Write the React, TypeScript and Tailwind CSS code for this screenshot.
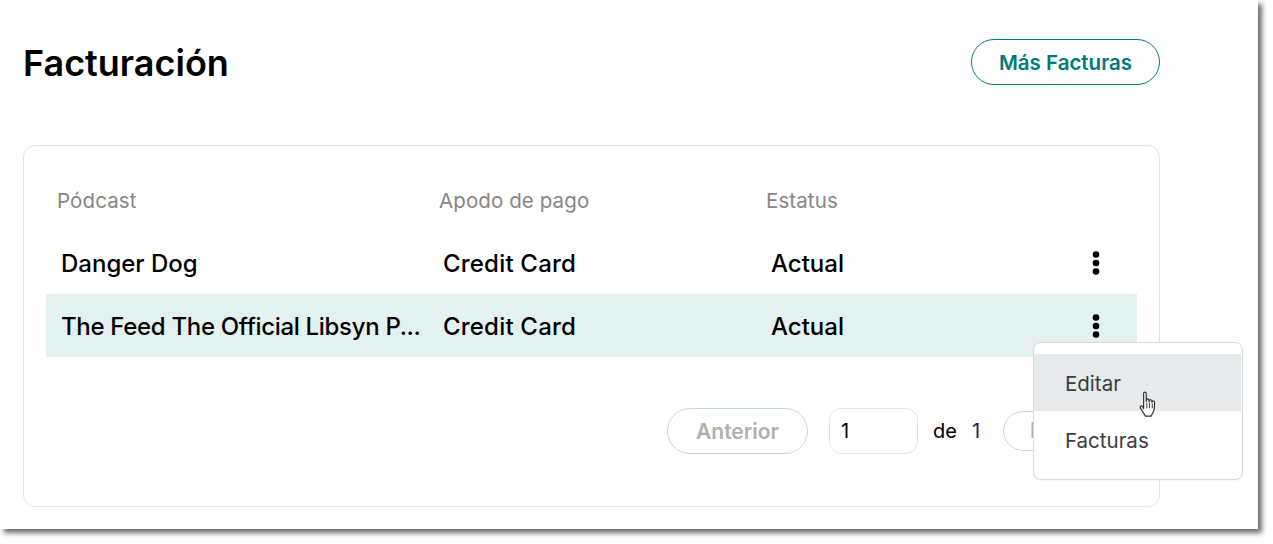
import React from "react";

function Dots() {
  return (
    <svg width="8" height="24" viewBox="0 0 8 24" className="block">
      <circle cx="4" cy="3.5" r="3.3" fill="#000" />
      <circle cx="4" cy="12" r="3.3" fill="#000" />
      <circle cx="4" cy="20.5" r="3.3" fill="#000" />
    </svg>
  );
}

function Row({ name, highlight }: { name: string; highlight?: boolean }) {
  return (
    <div className={`flex h-[63px] items-center text-[24px] font-medium text-black ${highlight ? "bg-[#e3f1f0]" : ""}`}>
      <div className={`w-[382px] shrink-0 whitespace-nowrap pl-[15px] pt-[2px] ${highlight ? "tracking-[-0.32px]" : ""}`}>{name}</div>
      <div className="w-[328px] shrink-0 pl-[15px] pt-[2px] tracking-[0.2px]">Credit Card</div>
      <div className="w-[336px] shrink-0 pl-[15px] pt-[2px]">Actual</div>
      <Dots />
    </div>
  );
}

export default function App() {
  return (
    <div className="h-[544px] w-[1273px] overflow-hidden bg-white font-['Inter',sans-serif]">
      <div className="relative h-[529px] w-[1258px] bg-white pl-[23px] pr-[98px] shadow-[4px_4px_5px_rgba(60,60,60,0.75)]">
        <header className="flex h-[145px] items-start justify-between">
          <h1 className="mt-[38px] text-[36px] leading-[50px] font-semibold text-black">Facturación</h1>
          <button className="mt-[39px] h-[46px] w-[189px] rounded-full border border-[#007a78] pt-[2px] text-[20.5px] font-semibold text-[#007a78]">
            Más Facturas
          </button>
        </header>

        <section className="h-[362px] rounded-xl border border-[#e4e4e4] px-[22px] pt-[40px]">
          <div className="flex h-[30px] items-center pl-[11px] text-[20.5px] tracking-[0.1px] text-[#8a8583]">
            <div className="w-[382px] shrink-0">Pódcast</div>
            <div className="w-[327px] shrink-0">Apodo de pago</div>
            <div>Estatus</div>
          </div>
          <div className="mt-[15px]">
            <Row name="Danger Dog" />
            <Row name="The Feed The Official Libsyn P..." highlight />
          </div>
          <div className="mt-[51px] flex items-center pl-[621px]">
            <button className="h-[46px] w-[141px] rounded-full border border-[#bcdcdb] pt-[2px] text-[21px] font-semibold text-[#b0b0b0]">
              Anterior
            </button>
            <input
              readOnly
              value="1"
              className="ml-[21px] h-[46px] w-[89px] rounded-xl border border-[#e4e4e4] px-[11px] text-[20px] text-black outline-none"
            />
            <span className="ml-[15px] text-[20px] text-black">de</span>
            <span className="ml-[15px] text-[20px] text-[#1a1a6e]">1</span>
            <button className="ml-[23px] h-[40px] w-[132px] rounded-full border border-[#bcdcdb] pl-[26px] text-left text-[21px] font-semibold text-[#b0b0b0]">
              Próximo
            </button>
          </div>
        </section>

        <div className="absolute left-[1033px] top-[342px] h-[138px] w-[210px] rounded-lg border border-[#d8dada] bg-white pt-[11px] text-[20.5px] text-[#3a3d40] shadow-[0_1px_2px_rgba(0,0,0,0.04)]">
          <div className="mr-[1px] flex h-[57px] items-center bg-[#e6eaec] pl-[31px] pt-[4px]">Editar</div>
          <div className="flex h-[57px] items-center pl-[31px] pt-[4px]">Facturas</div>
        </div>

        <svg className="absolute left-[1138px] top-[391px]" width="21" height="27" viewBox="0 0 19 25">
          <path
            d="M5 2.2c0-1.500 2.400-1.500 2.400 0v7.600l.2-1.600c.2-1.300 2.200-1.200 2.300.2l.1 1.700.3-1.200c.3-1.200 2.200-1 2.300.3l.1 1.300.4-.8c.5-.9 2-.6 2 .7 0 3.600.1 6.400-1 8.800-.7 1.600-1.600 3-2.200 4.100H6.800c-1.400-2.300-3-4.400-4.800-7.600-.7-1.300.6-2.600 1.800-1.600L5 16.300z"
            fill="#fff"
            stroke="#2b2f38"
            strokeWidth="1.1"
            strokeLinejoin="round"
          />
          <path d="M8 11v5M10.400 11v5M13 11.500v4.500" stroke="#2b2f38" strokeWidth="0.9" fill="none" />
        </svg>
      </div>
    </div>
  );
}
